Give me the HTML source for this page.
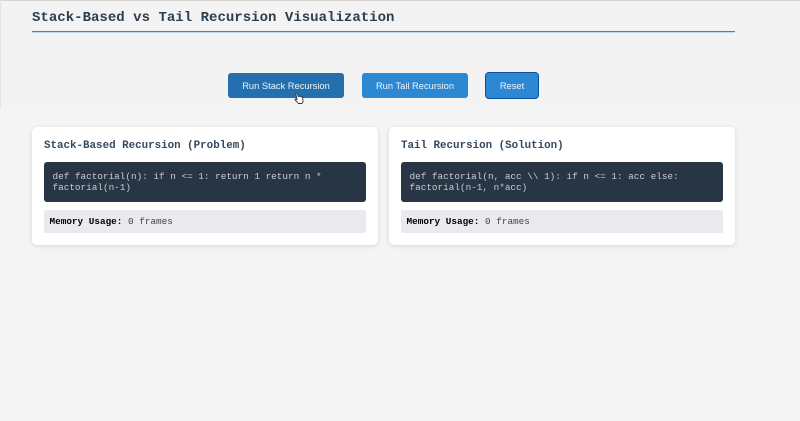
<!DOCTYPE html>
<html>
<head>
<meta charset="utf-8">
<style>
html,body{margin:0;padding:0;}
body{width:800px;height:421px;overflow:hidden;background:#f4f4f4;position:relative;font-family:"Liberation Sans",sans-serif;}
.abs{position:absolute;box-sizing:border-box;}
.title{left:32px;top:10px;font:bold 14.05px/17px "Liberation Mono",monospace;color:#2c3e50;white-space:nowrap;}
.btn{top:73px;height:25px;border-radius:3px;background:#2d88d4;color:#eef5fb;font-size:9.33px;line-height:26px;text-align:center;white-space:nowrap;}
.card{top:127px;width:346px;height:118px;background:#fff;border-radius:5px;box-shadow:0 1px 5px rgba(0,0,0,.12);}
.h{left:12px;top:11.500px;font:bold 10.85px/14px "Liberation Mono",monospace;color:#34495e;white-space:nowrap;}
.code{left:12px;top:35px;width:322px;height:40px;background:#283545;border-radius:3px;padding:8.500px 8.500px;font:9.35px/11.300px "Liberation Mono",monospace;color:#c9cdd1;white-space:nowrap;}
.mem{left:12px;top:83px;width:322px;height:23px;background:#e8eaed;border-radius:2px;padding-left:5.500px;font:9.35px/23px "Liberation Mono",monospace;color:#444;white-space:nowrap;}
.mem b{color:#000;}
</style>
</head>
<body>
<div class="abs" style="left:0;top:0;width:800px;height:108px;background:#f3f3f3;"></div>
<div class="abs" style="left:0;top:0;width:800px;height:1px;background:#d4d4d4;"></div>
<div class="abs" style="left:0;top:0;width:1px;height:108px;background:#e4e4e4;"></div>
<div class="abs title">Stack-Based vs Tail Recursion Visualization</div>
<div class="abs" style="left:32px;top:31px;width:703px;height:1px;background:#2f86d6;"></div>
<div class="abs" style="left:32px;top:32px;width:703px;height:1px;background:#c4daee;"></div>

<div class="abs btn" style="left:228px;width:116px;background:#2470ae;">Run Stack Recursion</div>
<div class="abs btn" style="left:362px;width:106px;">Run Tail Recursion</div>
<div class="abs btn" style="left:485px;width:54px;top:72px;height:27px;line-height:27px;border:1px solid #0f4f9c;border-radius:4px;">Reset</div>

<svg class="abs" style="left:293px;top:92px;" width="12" height="13" viewBox="0 0 12 13">
<path d="M3 1.200c.6-.5 1.300-.2 1.500.5l.8 3 .3-.4c.5-.3 1-.2 1.300.2.5-.3 1-.2 1.300.3.5-.2 1-.1 1.200.5l.6 3c.2 1.300-.3 2.500-1.200 3.200H5.500L2 7.800c-.3-.6.2-1.200.9-.9l1.100.8L3 2.200c-.1-.4-.2-.7 0-1z" fill="#fff" stroke="#2b3540" stroke-width=".9" stroke-linejoin="round"/>
</svg>

<div class="abs card" style="left:32px;">
  <div class="abs h">Stack-Based Recursion (Problem)</div>
  <div class="abs code">def factorial(n): if n &lt;= 1: return 1 return n *<br>factorial(n-1)</div>
  <div class="abs mem"><b>Memory Usage:</b> 0 frames</div>
</div>

<div class="abs card" style="left:389px;">
  <div class="abs h">Tail Recursion (Solution)</div>
  <div class="abs code">def factorial(n, acc \\ 1): if n &lt;= 1: acc else:<br>factorial(n-1, n*acc)</div>
  <div class="abs mem"><b>Memory Usage:</b> 0 frames</div>
</div>
</body>
</html>
